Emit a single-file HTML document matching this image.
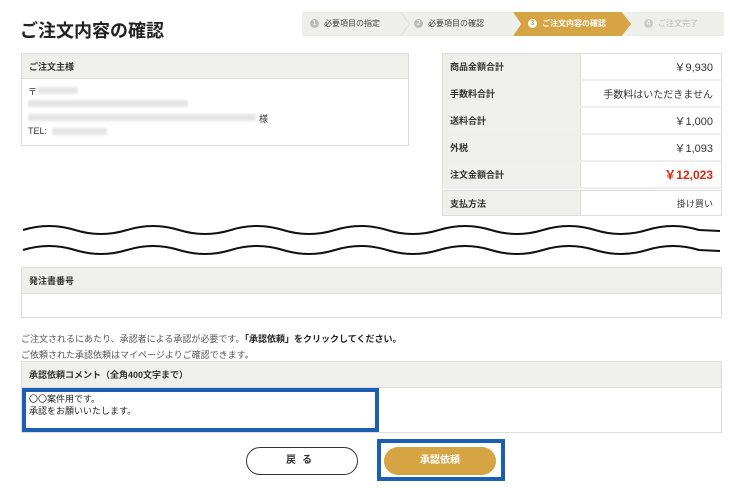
<!DOCTYPE html>
<html><head><meta charset="utf-8"><style>
*{margin:0;padding:0;box-sizing:border-box}
body{width:742px;height:490px;background:#fff;font-family:"Liberation Sans","Noto Sans CJK JP",sans-serif;color:#333;position:relative;overflow:hidden;font-size:9px}
.a{position:absolute}
.b{font-weight:bold}
.hd{background:#efefeb;border-bottom:1px solid #ddd;padding-left:7px;font-weight:bold;display:flex;align-items:center}
.box{border:1px solid #ddd}
.blur{background:#e4e4e4;border-radius:2px;filter:blur(1.2px)}
.row{display:flex;border-bottom:2px solid #eee;height:27px}
.row .l{width:138px;background:#efefeb;font-weight:bold;padding-left:7px;display:flex;align-items:center;border-right:1px solid #ddd}
.row .r{flex:1;text-align:right;padding-right:8px;display:flex;align-items:center;justify-content:flex-end;font-size:10px}
.circ{display:inline-block;width:9px;height:9px;border-radius:50%;background:#bbb;color:#fff;font-size:7px;text-align:center;line-height:9px;margin-right:5px;vertical-align:middle}
</style></head><body>
<div class="a b" style="left:20px;top:17px;font-size:18px;color:#222">ご注文内容の確認</div>

<div class="a" style="left:302px;top:12px;width:422px;height:24px;background:#eeeeea"></div>
<div class="a" style="left:310px;top:18px;font-size:8px;color:#444"><span class="circ">1</span>必要項目の指定</div>
<div class="a" style="left:400px;top:12px;width:10px;height:24px;background:#ddd;clip-path:polygon(0 0,10% 0,100% 50%,10% 100%,0 100%,90% 50%)"></div>
<div class="a" style="left:414px;top:18px;font-size:8px;color:#444"><span class="circ">2</span>必要項目の確認</div>
<div class="a" style="left:513px;top:12px;width:118px;height:24px;background:#d7a443;clip-path:polygon(0 0,92% 0,100% 50%,92% 100%,0 100%,7% 50%)"></div>
<div class="a b" style="left:528px;top:18px;font-size:8px;color:#fff"><span class="circ" style="background:#fff;color:#d7a443">3</span>ご注文内容の確認</div>
<div class="a" style="left:644px;top:18px;font-size:8px;color:#bbb"><span class="circ" style="background:#ccc">4</span>ご注文完了</div>

<div class="a box" style="left:21px;top:53px;width:388px;height:93px">
<div class="hd" style="height:25px">ご注文主様</div>
<div style="position:relative">
<div class="a" style="left:6px;top:6px">〒</div><div class="a blur" style="left:16px;top:8px;width:40px;height:7px"></div>
<div class="a blur" style="left:6px;top:21px;width:160px;height:7px"></div>
<div class="a blur" style="left:6px;top:35px;width:228px;height:7px"></div><div class="a" style="left:237px;top:33px">様</div>
<div class="a" style="left:6px;top:47px">TEL:</div><div class="a blur" style="left:30px;top:49px;width:55px;height:7px"></div>
</div></div>

<div class="a box" style="left:442px;top:53px;width:280px;border-bottom:none">
<div class="row"><div class="l">商品金額合計</div><div class="r" style="font-size:11px">￥9,930</div></div>
<div class="row"><div class="l">手数料合計</div><div class="r">手数料はいただきません</div></div>
<div class="row"><div class="l">送料合計</div><div class="r" style="font-size:11px">￥1,000</div></div>
<div class="row"><div class="l">外税</div><div class="r" style="font-size:11px">￥1,093</div></div>
<div class="row"><div class="l">注文金額合計</div><div class="r b" style="color:#d42a10;font-size:12px">￥12,023</div></div>
</div>
<div class="a box" style="left:442px;top:190px;width:280px;height:26px;display:flex">
<div style="width:138px;background:#efefeb;font-weight:bold;padding-left:7px;display:flex;align-items:center;border-right:1px solid #ddd">支払方法</div>
<div style="flex:1;text-align:right;padding-right:8px;display:flex;align-items:center;justify-content:flex-end">掛け買い</div></div>

<svg class="a" style="left:0;top:0" width="742" height="490">
<path d="M23,230 Q49,222 75,230 T127,230 T179,230 T231,230 T283,230 T335,230 T387,230 T439,230 T491,230 T543,230 T595,230 T647,230 T699,230 L720,231" fill="none" stroke="#111" stroke-width="2"/>
<path d="M23,250 Q49,242 75,250 T127,250 T179,250 T231,250 T283,250 T335,250 T387,250 T439,250 T491,250 T543,250 T595,250 T647,250 T699,250 L720,251" fill="none" stroke="#111" stroke-width="2"/>
</svg>

<div class="a box" style="left:21px;top:267px;width:701px;height:51px">
<div class="hd" style="height:26px">発注書番号</div></div>

<div class="a" style="left:21px;top:332px;color:#555">ご注文されるにあたり、承認者による承認が必要です。<b style="color:#222">「承認依頼」をクリックしてください。</b></div>
<div class="a" style="left:21px;top:348px;color:#555">ご依頼された承認依頼はマイページよりご確認できます。</div>

<div class="a box" style="left:21px;top:361px;width:701px;height:72px">
<div class="hd" style="height:26px">承認依頼コメント（全角400文字まで）</div></div>
<div class="a" style="left:22px;top:388px;width:357px;height:44px;border:4px solid #1a5fb4;background:#fff;padding:1px 3px;line-height:12px;color:#222">〇〇案件用です。<br>承認をお願いいたします。</div>

<div class="a b" style="left:246px;top:447px;width:112px;height:28px;border:1.5px solid #333;border-radius:14px;text-align:center;line-height:25px;font-size:10px;letter-spacing:6px">戻る</div>
<div class="a" style="left:377px;top:439px;width:128px;height:42px;border:4px solid #1a5fb4;background:#fff"></div>
<div class="a b" style="left:384px;top:447px;width:112px;height:28px;background:#d7a443;border-radius:14px;text-align:center;line-height:28px;font-size:10px;color:#fff">承認依頼</div>
</body></html>
